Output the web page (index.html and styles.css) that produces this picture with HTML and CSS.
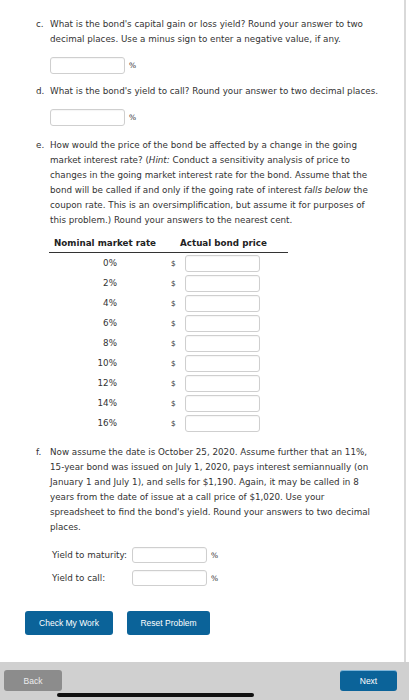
FILE: index.html
```html
<!DOCTYPE html>
<html>
<head>
<meta charset="utf-8">
<link rel="stylesheet" href="styles.css">
</head>
<body>
<div class="page">
  <div class="content">
    <div class="item">
      <span class="marker">c.</span>
      <div class="body">
        <p>What is the bond's capital gain or loss yield? Round your answer to two decimal places. Use a minus sign to enter a negative value, if any.</p>
        <div class="answer"><span class="box"></span><span class="unit">%</span></div>
      </div>
    </div>
    <div class="item">
      <span class="marker">d.</span>
      <div class="body">
        <p>What is the bond's yield to call? Round your answer to two decimal places.</p>
        <div class="answer"><span class="box"></span><span class="unit">%</span></div>
      </div>
    </div>
    <div class="item item-e">
      <span class="marker">e.</span>
      <div class="body">
        <p>How would the price of the bond be affected by a change in the going market interest rate? (<i>Hint:</i> Conduct a sensitivity analysis of price to changes in the going market interest rate for the bond. Assume that the bond will be called if and only if the going rate of interest <i>falls below</i> the coupon rate. This is an oversimplification, but assume it for purposes of this problem.) Round your answers to the nearest cent.</p>
        <table class="rates">
          <thead>
            <tr><th class="c1">Nominal market rate</th><th class="c2">Actual bond price</th></tr>
          </thead>
          <tbody>
            <tr><td class="rate">0%</td><td class="price"><span class="dollar">$</span><span class="box"></span></td></tr>
            <tr><td class="rate">2%</td><td class="price"><span class="dollar">$</span><span class="box"></span></td></tr>
            <tr><td class="rate">4%</td><td class="price"><span class="dollar">$</span><span class="box"></span></td></tr>
            <tr><td class="rate">6%</td><td class="price"><span class="dollar">$</span><span class="box"></span></td></tr>
            <tr><td class="rate">8%</td><td class="price"><span class="dollar">$</span><span class="box"></span></td></tr>
            <tr><td class="rate">10%</td><td class="price"><span class="dollar">$</span><span class="box"></span></td></tr>
            <tr><td class="rate">12%</td><td class="price"><span class="dollar">$</span><span class="box"></span></td></tr>
            <tr><td class="rate">14%</td><td class="price"><span class="dollar">$</span><span class="box"></span></td></tr>
            <tr><td class="rate">16%</td><td class="price"><span class="dollar">$</span><span class="box"></span></td></tr>
          </tbody>
        </table>
      </div>
    </div>
    <div class="item">
      <span class="marker">f.</span>
      <div class="body">
        <p>Now assume the date is October 25, 2020. Assume further that an 11%, 15-year bond was issued on July 1, 2020, pays interest semiannually (on January 1 and July 1), and sells for $1,190. Again, it may be called in 8 years from the date of issue at a call price of $1,020. Use your spreadsheet to find the bond's yield. Round your answers to two decimal places.</p>
        <div class="yields">
          <div class="yrow"><span class="ylabel">Yield to maturity:</span><span class="box"></span><span class="unit">%</span></div>
          <div class="yrow"><span class="ylabel">Yield to call:</span><span class="box"></span><span class="unit">%</span></div>
        </div>
      </div>
    </div>
    <div class="actions">
      <button class="btn check">Check My Work</button>
      <button class="btn reset">Reset Problem</button>
    </div>
  </div>
  <div class="footer">
    <button class="nav back">Back</button>
    <button class="nav next">Next</button>
  </div>
  <div class="home-indicator"></div>
</div>
</body>
</html>
```
FILE: styles.css
```css
* { box-sizing: border-box; }
html, body { margin: 0; padding: 0; background: #fff; }
.page {
  width: 409px;
  height: 700px;
  position: relative;
  display: flex;
  flex-direction: column;
  font-family: "DejaVu Sans", Verdana, sans-serif;
  font-size: 8.75px;
  line-height: 15px;
  color: #333;
}
.content {
  flex: 1;
  width: 406px;
  border-right: 2px solid #d9d9d9;
  padding: 17px 0 0 36px;
}
.item { display: flex; margin-bottom: 10px; }
.item-e { padding-top: 2px; margin-bottom: 12px; }
.marker { width: 14px; flex: none; }
.body { flex: 1; }
p { margin: 0; padding-right: 25px; }
.answer { display: flex; align-items: center; margin-top: 10px; }
.box {
  display: inline-block;
  width: 75px;
  height: 17px;
  border: 1px solid #cfcfcf;
  border-radius: 3px;
  background: #fff;
  box-shadow: inset 0 1px 1px rgba(0,0,0,0.04);
}
.unit { margin-left: 4px; font-size: 7.5px; }
.rates {
  margin-top: 8px;
  margin-left: -1px;
  border-collapse: collapse;
  width: 239px;
}
.rates th {
  font-weight: bold;
  color: #222;
  text-align: left;
  padding: 0 0 1px 0;
  border-bottom: 1px solid #333;
  line-height: 15px;
}
.rates th.c1 { padding-left: 5px; width: 122px; }
.rates th.c2 { padding-left: 9px; }
.rates td { padding: 0; height: 20px; }
.rates td.rate { text-align: right; padding-right: 54px; }
.price { display: flex; align-items: center; height: 20px; padding-left: 11px; }
.dollar { width: 14px; font-size: 7.5px; }
.yields { margin-top: 12px; margin-left: 2px; display: flex; flex-direction: column; gap: 7px; }
.yrow { display: flex; align-items: center; }
.ylabel { width: 80px; }
.yrow .box { height: 16px; }
.actions { display: flex; gap: 14px; margin: 25px 0 0 -11px; }
.btn {
  height: 24px;
  border: none;
  border-radius: 3px;
  background: #0b6399;
  color: #fff;
  font-family: "Liberation Sans", Arial, sans-serif;
  font-size: 8.5px;
  padding: 0;
}
.btn.check { width: 88px; }
.btn.reset { width: 83px; }
.footer {
  height: 38px;
  background: #d0d0d0;
  display: flex;
  justify-content: space-between;
  align-items: flex-start;
  padding: 8px 12px 0 4px;
}
.nav {
  height: 21px;
  border: none;
  border-radius: 3px;
  font-family: "Liberation Sans", Arial, sans-serif;
  font-size: 8.5px;
  padding: 0;
}
.nav.back { width: 58px; background: #8c8c8c; color: #ececec; }
.nav.next { width: 57px; background: #0b6399; color: #fff; border-top: 1px solid #7fb5d8; }
.home-indicator {
  position: absolute;
  left: 57px;
  top: 693px;
  width: 197px;
  height: 4px;
  border-radius: 2px;
  background: #111;
}
```
